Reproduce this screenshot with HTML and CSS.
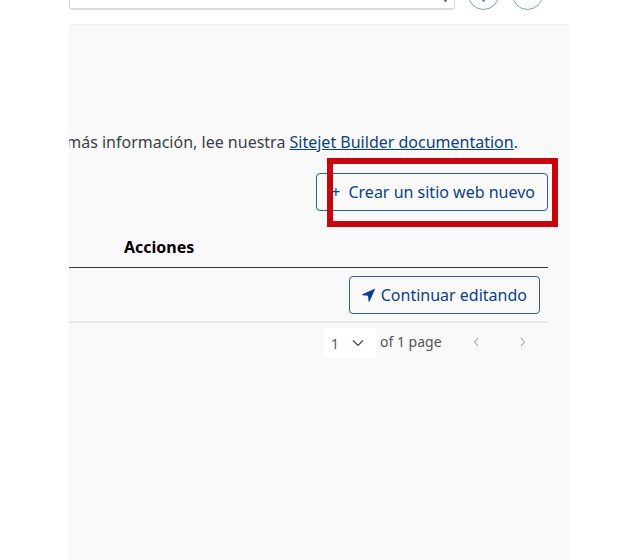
FILE: index.html
```html
<!DOCTYPE html>
<html lang="es">
<head>
<meta charset="utf-8">
<title>Sitejet Builder</title>
<link rel="stylesheet" href="styles.css">
</head>
<body>
<div class="page">
  <aside class="gutter"></aside>
  <div class="app">
    <header class="topbar">
      <div class="search"><span class="search-text">Sitio web: misitio.com (1)</span><span class="caret"></span></div>
      <span class="circle circle-a"><span class="dot"></span></span>
      <span class="circle circle-b"></span>
    </header>
    <main class="panel">
      <div class="intro"><span class="intro-line">Para obtener más información, lee nuestra <a href="#" class="doc">Sitejet Builder documentation</a>.</span></div>
      <div class="create-row">
        <button class="btn create"><span class="plus">+</span>Crear un sitio web nuevo</button>
      </div>
      <div class="thead"><span class="th">Acciones</span></div>
      <div class="trow">
        <button class="btn cont">
          <svg class="send" viewBox="0 0 16 16" width="14" height="14"><path d="M15.5.5 .5 7.1c-.5.3-.4 1 .2 1.1L7 8.9l.7 6.4c.1.6.8.7 1.1.2z" fill="#0b3f8c"/></svg>
          Continuar editando
        </button>
      </div>
      <div class="pager">
        <span class="pg-select">1
          <svg class="chev" viewBox="0 0 12 8" width="12" height="8"><path d="M1 1.5 6 6.5 11 1.5" fill="none" stroke="#444" stroke-width="1.2"/></svg>
        </span>
        <span class="pg-text">of 1 page</span>
        <svg class="arrow prev" viewBox="0 0 6 10" width="6" height="10"><path d="M5 1 1.5 5 5 9" fill="none" stroke="#8a8f95" stroke-width="1"/></svg>
        <svg class="arrow next" viewBox="0 0 6 10" width="6" height="10"><path d="M1 1 4.5 5 1 9" fill="none" stroke="#8a8f95" stroke-width="1"/></svg>
      </div>
    </main>
  </div>
  <aside class="gutter-right"></aside>
</div>
<div class="highlight"></div>
</body>
</html>
```
FILE: styles.css
```css
* { box-sizing: border-box; }
html, body { margin: 0; padding: 0; height: 100%; background: #fff; overflow: hidden; }
body { font-family: "Noto Sans", "Open Sans", sans-serif; color: #33383d; position: relative; }
.page { display: flex; width: 640px; height: 560px; }
.gutter { width: 69px; flex: none; }
.gutter-right { width: 70px; flex: none; }
.app { width: 501px; flex: none; display: flex; flex-direction: column; overflow: hidden; }
.topbar { height: 24px; flex: none; position: relative; }
.search { position: absolute; left: 0; top: -24px; width: 386px; height: 34px; background: #fff; border: 1px solid #d2d4d7; border-bottom: 2px solid #dcdcdc; border-radius: 4px; padding: 5px 20px; font-size: 14px; line-height: 20px; color: #8c8c8c; }
.caret { position: absolute; right: 7px; top: 22px; width: 3px; height: 3px; background: #777; border-radius: 50%; }
.circle { position: absolute; top: -21px; width: 31px; height: 31px; border: 1px solid #7d9cc6; border-radius: 50%; }
.circle-a { left: 399px; }
.circle-b { left: 443px; }
.dot { position: absolute; left: 13px; top: 19px; width: 3px; height: 3px; background: #7d9cc6; border-radius: 50%; }
.panel { flex: 1; background: #f9f9fa; box-shadow: inset 0 2px 2px -1px #eeeeee; padding: 0 22px 0 0; overflow: hidden; }
.intro { margin: 107px 0 0; font-size: 16px; line-height: 22px; white-space: nowrap; display: flex; justify-content: flex-end; padding-right: 30px; color: #3a3f44; }
.intro-line { flex: none; }
.doc { color: #0b3f8c; text-decoration: underline; }
.create-row { display: flex; justify-content: flex-end; margin-top: 20px; }
.btn { font-family: inherit; font-size: 16px; color: #0b3f8c; background: transparent; border: 1px solid #2d5d9c; border-radius: 4px; display: flex; align-items: center; height: 38px; padding: 0 12px; white-space: nowrap; }
.plus { margin-right: 8px; font-size: 16px; width: 10px; }
.create { width: 232px; padding-left: 14px; }
.thead { margin-top: 20px; height: 37px; border-bottom: 1px solid #333; padding: 5px 0 0 55px; }
.th { font-size: 16px; font-weight: 700; color: #000; line-height: 22px; display: block; }
.trow { height: 55px; border-bottom: 2px solid #e8e8e8; display: flex; justify-content: flex-end; align-items: center; padding-right: 8px; }
.cont { width: 191px; gap: 5px; }
.pager { height: 40px; font-size: 14px; color: #555; position: relative; }
.pg-select { position: absolute; left: 255px; top: 5px; width: 52px; height: 30px; background: #fff; display: flex; align-items: center; padding-left: 7px; gap: 13px; }
.pg-text { position: absolute; left: 311px; top: 9px; line-height: 20px; }
.arrow { position: absolute; top: 14px; }
.prev { left: 404px; }
.next { left: 451px; }
.highlight { position: absolute; left: 327px; top: 158px; width: 231px; height: 69px; border: 6px solid #c8040c; pointer-events: none; }
```
